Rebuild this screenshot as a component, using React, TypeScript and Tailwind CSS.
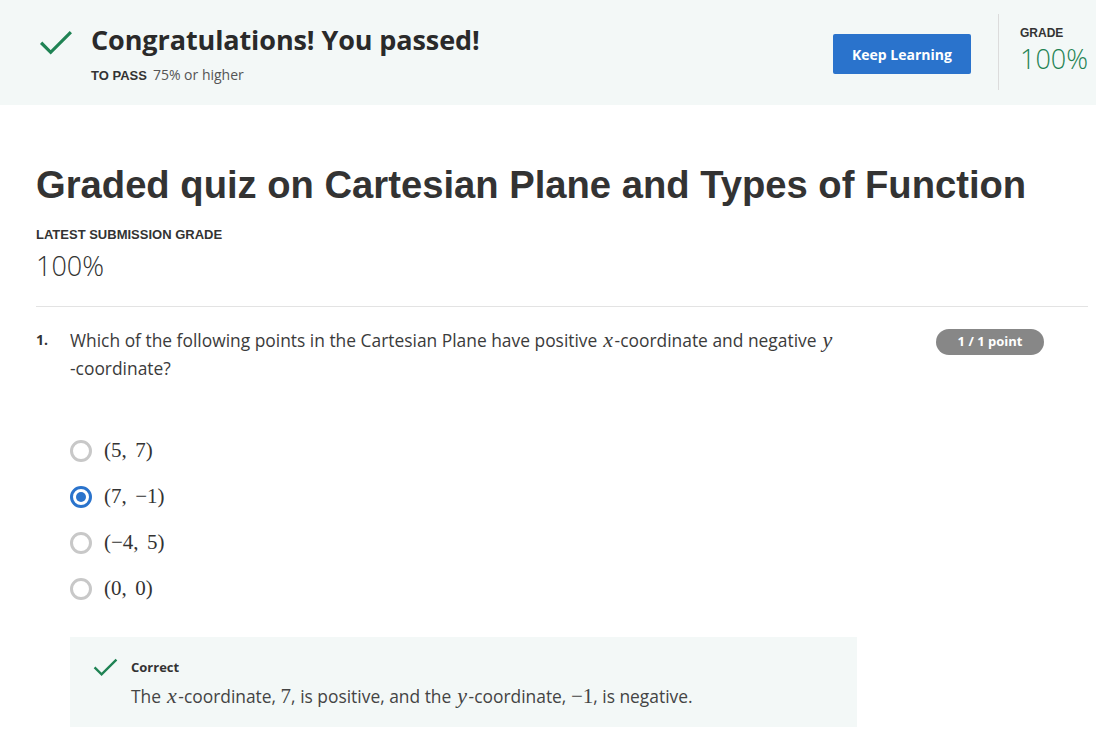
import React from "react";

const Check = ({ size = 34 }: { size?: number }) => (
  <svg width={size} height={size * 0.75} viewBox="0 0 32 24" fill="none">
    <path d="M2 12 L11 21 L30 2" stroke="#1f8354" strokeWidth="3" strokeLinecap="butt" strokeLinejoin="miter" />
  </svg>
);

const serif = { fontFamily: '"Liberation Serif", "DejaVu Serif", serif' };
const M = ({ children }: { children: React.ReactNode }) => (
  <span style={serif} className="text-[21px]">{children}</span>
);
const Mi = ({ children }: { children: React.ReactNode }) => (
  <span style={serif} className="italic text-[22px] mx-[1.5px]">{children}</span>
);

const Radio = ({ checked }: { checked?: boolean }) =>
  checked ? (
    <span className="w-[22px] h-[22px] rounded-full border-[3px] border-[#2a73cc] flex items-center justify-center">
      <span className="w-[10px] h-[10px] rounded-full bg-[#2a73cc]" />
    </span>
  ) : (
    <span className="w-[22px] h-[22px] rounded-full border-[3px] border-[#c8c8c8]" />
  );

export default function App() {
  const sans = { fontFamily: '"Open Sans", "Noto Sans", sans-serif' };
  const arial = { fontFamily: '"Liberation Sans", Arial, sans-serif' };
  const options = ["(5,\u2009\u20097)", "(7,\u2009\u2009−1)", "(−4,\u2009\u20095)", "(0,\u2009\u20090)"];
  return (
    <div className="w-[1096px] h-[740px] bg-white overflow-hidden text-[#333]" style={sans}>
      <div className="h-[105px] bg-[#f3f8f7] flex items-start">
        <div className="pl-[39px] pt-[30px]">
          <Check size={34} />
        </div>
        <div className="pl-[18px] pt-[22px] flex-1">
          <div className="text-[27px] font-bold text-[#2a2a2a] leading-[36px] tracking-[-0.1px]">Congratulations! You passed!</div>
          <div className="mt-[6px] flex items-baseline gap-[6px]">
            <span className="font-bold text-[#333] text-[13px]" style={arial}>TO PASS</span>
            <span className="text-[#555] text-[14px]">75% or higher</span>
          </div>
        </div>
        <div className="pt-[34px] pr-[27px]">
          <button className="w-[138px] h-[40px] bg-[#2a73cc] text-white text-[14px] font-bold rounded-[2px]">Keep Learning</button>
        </div>
        <div className="mt-[14px] h-[76px] w-px bg-[#dcdcdc]" />
        <div className="pl-[21px] pt-[26px] w-[97px]">
          <div className="text-[12px] font-bold text-[#333] leading-[14px]" style={arial}>GRADE</div>
          <div className="text-[27px] font-light text-[#1f8354] leading-[34px] mt-[2px]">100%</div>
        </div>
      </div>

      <div className="px-[36px] pr-[8px]">
        <h1 className="mt-[58px] text-[38.2px] font-bold text-[#333] leading-[44px] whitespace-nowrap" style={arial}>
          Graded quiz on Cartesian Plane and Types of Function
        </h1>
        <div className="mt-[21px] text-[13px] font-bold text-[#333] leading-[14px]" style={arial}>LATEST SUBMISSION GRADE</div>
        <div className="mt-[8px] text-[27px] font-light text-[#333] leading-[32px]">100%</div>
        <div className="mt-[24px] h-px bg-[#e3e3e3]" />

        <div className="mt-[19px] flex">
          <div className="w-[34px] text-[14px] font-bold leading-[28px]">1.</div>
          <div className="w-[820px] text-[17.4px] leading-[28px] text-[#3b3b3b]">
            Which of the following points in the Cartesian Plane have positive <Mi>x</Mi>-coordinate and negative <Mi>y</Mi>
            <br />-coordinate?
          </div>
          <div className="ml-[46px] mt-[2px]">
            <span className="inline-flex items-center justify-center w-[108px] h-[26px] rounded-full bg-[#878787] text-white text-[13px] font-bold">1 / 1 point</span>
          </div>
        </div>

        <div className="mt-[57px] ml-[34px] flex flex-col gap-[22px]">
          {options.map((o, i) => (
            <div key={o} className="flex items-center gap-[12px] h-[24px]">
              <Radio checked={i === 1} />
              <M>{o}</M>
            </div>
          ))}
        </div>

        <div className="mt-[36px] ml-[34px] w-[787px] h-[90px] bg-[#f3f8f7] pl-[23px] pt-[21px]">
          <div className="flex items-center gap-[13px]">
            <Check size={25} />
            <span className="text-[13px] font-bold text-[#333]">Correct</span>
          </div>
          <div className="ml-[38px] mt-[5px] text-[17.4px] text-[#444] leading-[26px]">
            The <Mi>x</Mi>-coordinate, <M>7</M>, is positive, and the <Mi>y</Mi>-coordinate, <M>−1</M>, is negative.
          </div>
        </div>
      </div>
    </div>
  );
}
